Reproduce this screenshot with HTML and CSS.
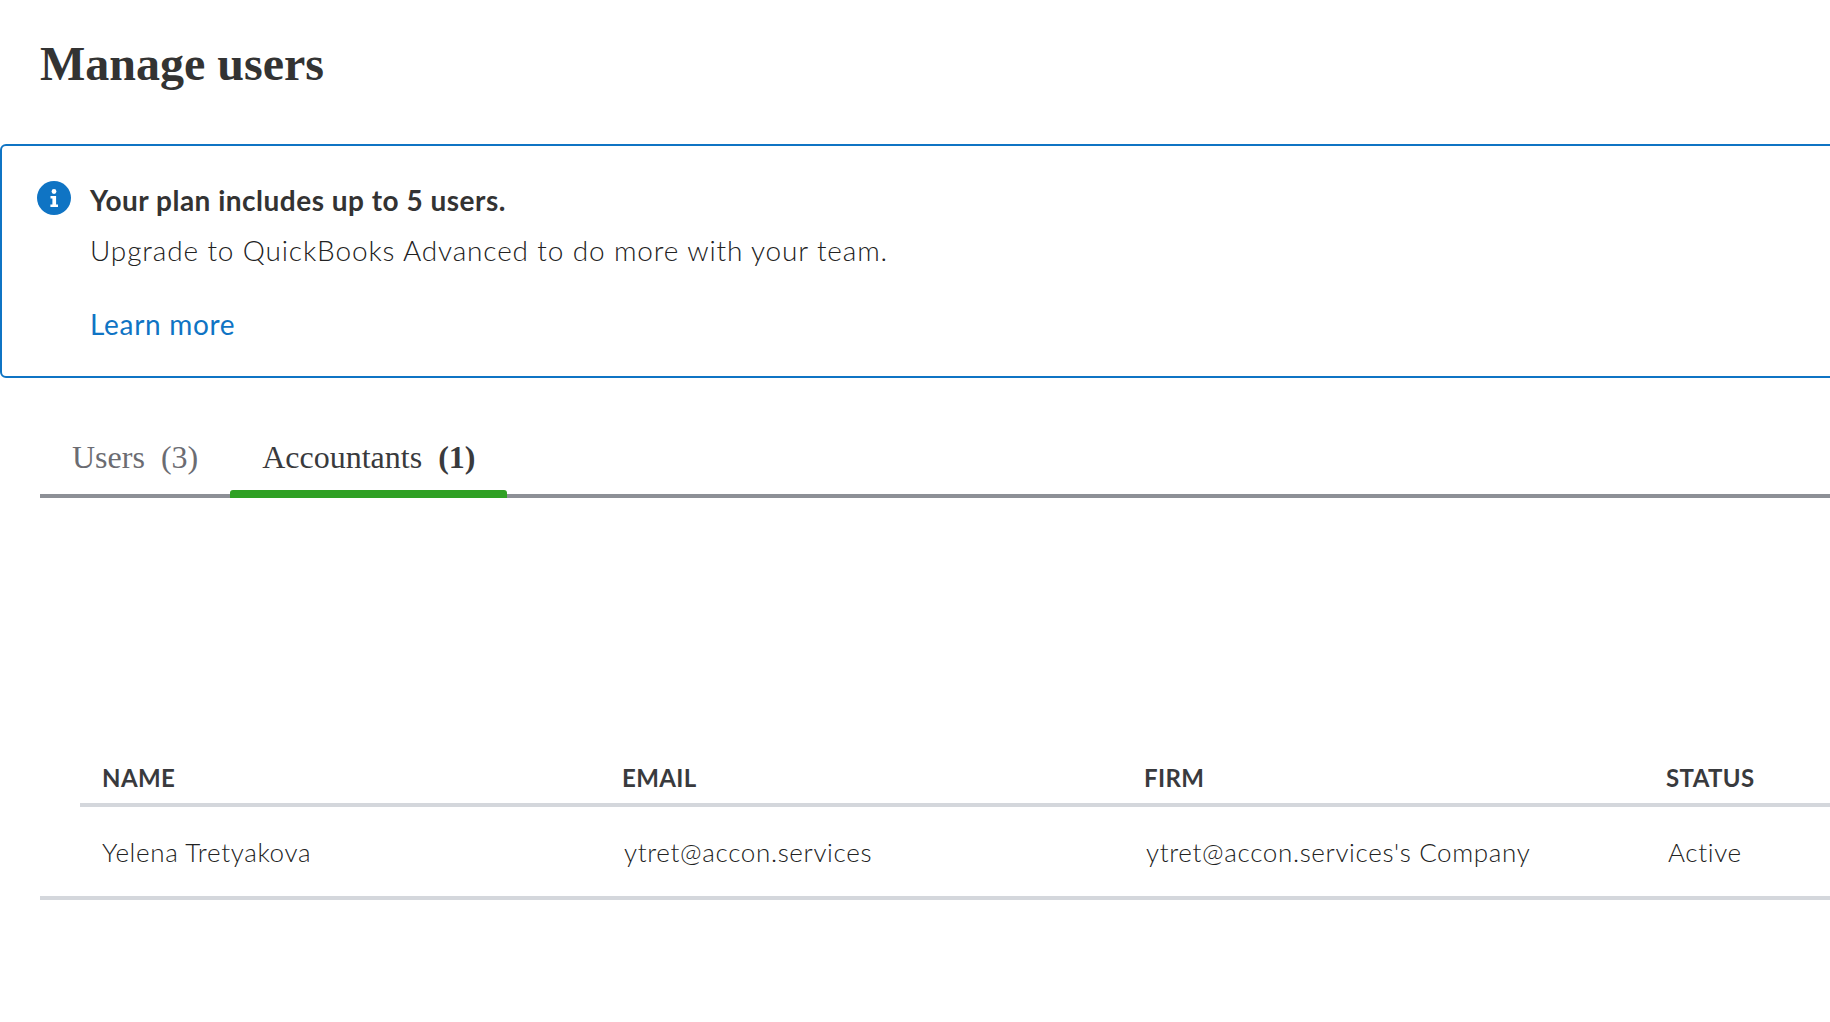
FILE: index.html
```html
<!DOCTYPE html>
<html lang="en">
<head>
    <meta charset="UTF-8">
    <meta name="viewport" content="width=device-width, initial-scale=1.0">
    <title>Manage users</title>
    <link rel="stylesheet" href="styles.css">
</head>
<body>
    <h1 class="page-title">Manage users</h1>

    <div class="banner">
        <svg class="banner-icon" viewBox="0 0 34 34" aria-hidden="true">
            <circle cx="17" cy="17" r="17" fill="#0f74c4"/>
            <circle cx="17" cy="10.5" r="2.4" fill="#fff"/>
            <path d="M13.5 15h5.6v8.6h1.9V26h-7.6v-2.4h2v-6.2h-1.9z" fill="#fff"/>
        </svg>
        <div class="banner-body">
            <div class="banner-title">Your plan includes up to 5 users.</div>
            <div class="banner-text">Upgrade to QuickBooks Advanced to do more with your team.</div>
            <a class="banner-link" href="#">Learn more</a>
        </div>
    </div>

    <div class="tabs">
        <div class="tab">Users&nbsp; (3)</div>
        <div class="tab tab-active">Accountants&nbsp; <b>(1)</b></div>
    </div>

    <div class="table">
        <div class="table-head">
            <div>NAME</div>
            <div>EMAIL</div>
            <div>FIRM</div>
            <div>STATUS</div>
        </div>
        <div class="table-row">
            <div>Yelena Tretyakova</div>
            <div class="cell">ytret@accon.services</div>
            <div class="cell">ytret@accon.services's Company</div>
            <div class="cell">Active</div>
        </div>
    </div>
</body>
</html>
```

FILE: styles.css
```css
html, body {
    overflow: hidden;
}

body {
    margin: 0;
    height: 1022px;
    background: #fff;
    color: #393a3d;
    font-family: 'Lato', 'Liberation Sans', sans-serif;
}

.page-title {
    margin: 0;
    padding: 36px 0 0 40px;
    height: 109px;
    box-sizing: border-box;
    font-family: 'Liberation Serif', serif;
    font-size: 48px;
    line-height: 56px;
    font-weight: bold;
    color: #333;
}

.banner {
    display: flex;
    width: calc(100% + 20px);
    height: 234px;
    margin-top: 35px;
    box-sizing: border-box;
    padding: 35px 0 0 35px;
    border: 2px solid #0f74c4;
    border-radius: 6px;
}

.banner-icon {
    width: 34px;
    height: 34px;
    flex-shrink: 0;
}

.banner-body {
    margin-left: 19px;
    font-size: 28px;
}

.banner-title {
    font-weight: bold;
    line-height: 38px;
    letter-spacing: 0.5px;
    color: #333;
}

.banner-text {
    margin-top: 12px;
    line-height: 38px;
    font-weight: 300;
    letter-spacing: 0.86px;
    color: #222;
}

.banner-link {
    display: block;
    margin-top: 36px;
    line-height: 38px;
    letter-spacing: 0.7px;
    color: #0f74c4;
    text-decoration: none;
}

.tabs {
    display: flex;
    margin: 37px 0 0 40px;
    height: 83px;
    box-sizing: border-box;
    border-bottom: 4px solid #8d9096;
    font-family: 'Liberation Serif', serif;
    font-size: 32px;
}

.tab {
    padding: 22px 32px 0;
    line-height: 40px;
    color: #6b6c72;
}

.tab-active {
    position: relative;
    color: #393a3d;
}

.tab-active::after {
    content: "";
    position: absolute;
    left: 0;
    right: 0;
    bottom: -4px;
    height: 8px;
    background: #2fa024;
    border-radius: 3px 3px 0 0;
}

.table {
    margin: 0 0 0 40px;
    padding-top: 255px;
}

.table-head,
.table-row {
    display: grid;
    grid-template-columns: 520px 522px 522px 1fr;
}

.table-head {
    margin-left: 40px;
    padding: 0 0 0 22px;
    height: 54px;
    box-sizing: border-box;
    line-height: 50px;
    border-bottom: 4px solid #d4d7dc;
    font-size: 24px;
    font-weight: bold;
    letter-spacing: 0.4px;
}

.table-row {
    padding-left: 62px;
    height: 93px;
    box-sizing: border-box;
    line-height: 90px;
    border-bottom: 4px solid #d4d7dc;
    font-size: 26px;
    font-weight: 300;
    letter-spacing: 0.65px;
    color: #222;
}

.cell {
    padding-left: 2px;
}
```
